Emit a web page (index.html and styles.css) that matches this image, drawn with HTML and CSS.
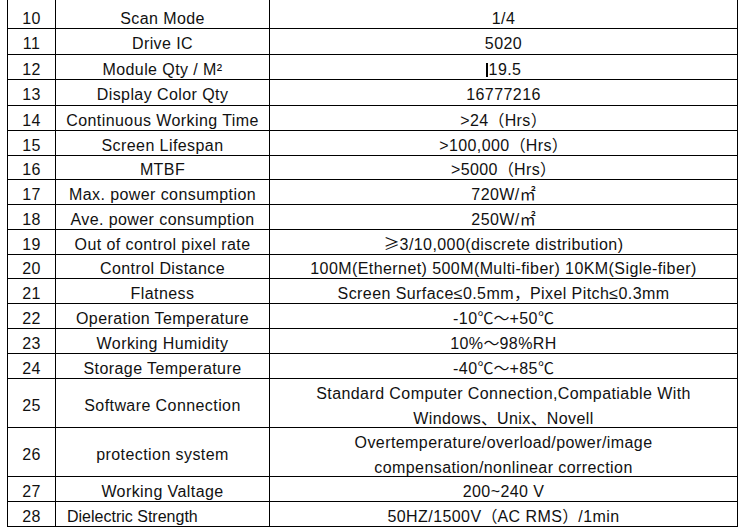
FILE: index.html
```html
<!DOCTYPE html>
<html>
<head>
<meta charset="utf-8">
<link rel="stylesheet" href="styles.css">
</head>
<body>
<div class="sheet">
  <div class="cell"></div><div class="cell"></div><div class="cell"></div>

  <div class="cell"><span>10</span></div><div class="cell"><span>Scan Mode</span></div><div class="cell"><span>1/4</span></div>
  <div class="cell"><span>11</span></div><div class="cell"><span>Drive IC</span></div><div class="cell"><span>5020</span></div>
  <div class="cell"><span>12</span></div><div class="cell"><span>Module Qty / M²</span></div><div class="cell"><span><span class="caret"></span>19.5</span></div>
  <div class="cell"><span>13</span></div><div class="cell"><span>Display Color Qty</span></div><div class="cell"><span>16777216</span></div>
  <div class="cell"><span>14</span></div><div class="cell"><span>Continuous Working Time</span></div><div class="cell"><span>&gt;24<span class="cjk">（</span>Hrs<span class="cjk">）</span></span></div>
  <div class="cell"><span>15</span></div><div class="cell"><span>Screen Lifespan</span></div><div class="cell"><span>&gt;100,000<span class="cjk">（</span>Hrs<span class="cjk">）</span></span></div>
  <div class="cell"><span>16</span></div><div class="cell"><span>MTBF</span></div><div class="cell"><span>&gt;5000<span class="cjk">（</span>Hrs<span class="cjk">）</span></span></div>
  <div class="cell"><span>17</span></div><div class="cell"><span>Max. power consumption</span></div><div class="cell"><span>720W/<span class="cjk">㎡</span></span></div>
  <div class="cell"><span>18</span></div><div class="cell"><span>Ave. power consumption</span></div><div class="cell"><span>250W/<span class="cjk">㎡</span></span></div>
  <div class="cell"><span>19</span></div><div class="cell"><span>Out of control pixel rate</span></div><div class="cell"><span><span class="cjk">≥</span>3/10,000(discrete distribution)</span></div>
  <div class="cell"><span>20</span></div><div class="cell"><span>Control Distance</span></div><div class="cell"><span>100M(Ethernet) 500M(Multi-fiber) 10KM(Sigle-fiber)</span></div>
  <div class="cell"><span>21</span></div><div class="cell"><span>Flatness</span></div><div class="cell"><span>Screen Surface≤0.5mm<span class="cjk">，</span>Pixel Pitch≤0.3mm</span></div>
  <div class="cell"><span>22</span></div><div class="cell"><span>Operation Temperature</span></div><div class="cell"><span>-10<span class="cjk">℃～</span>+50<span class="cjk">℃</span></span></div>
  <div class="cell"><span>23</span></div><div class="cell"><span>Working Humidity</span></div><div class="cell"><span>10%<span class="cjk">～</span>98%RH</span></div>
  <div class="cell"><span>24</span></div><div class="cell"><span>Storage Temperature</span></div><div class="cell"><span>-40<span class="cjk">℃～</span>+85<span class="cjk">℃</span></span></div>
  <div class="cell"><span>25</span></div><div class="cell"><span>Software Connection</span></div><div class="cell two"><span>Standard Computer Connection,Compatiable With<br>Windows<span class="cjk">、</span>Unix<span class="cjk">、</span>Novell</span></div>
  <div class="cell"><span>26</span></div><div class="cell"><span>protection system</span></div><div class="cell two"><span>Overtemperature/overload/power/image<br>compensation/nonlinear correction</span></div>
  <div class="cell"><span>27</span></div><div class="cell"><span>Working Valtage</span></div><div class="cell"><span>200~240 V</span></div>
  <div class="cell"><span>28</span></div><div class="cell left"><span>Dielectric Strength</span></div><div class="cell"><span>50HZ/1500V<span class="cjk">（</span>AC RMS<span class="cjk">）</span>/1min</span></div>
</div>
</body>
</html>
```

FILE: styles.css
```css
html, body {
  margin: 0;
  padding: 0;
  background: #fff;
}

body {
  font-family: "Liberation Sans", Arial, "Noto Sans CJK SC", sans-serif;
  font-size: 16px;
  letter-spacing: 0.42px;
  color: #111;
}

.sheet {
  display: grid;
  width: 731px;
  margin-left: 7px;
  box-sizing: border-box;
  padding: 0 1px 1px 1px;
  gap: 1px;
  background: #000;
  grid-template-columns: 47px 213px 467px;
  grid-template-rows: 3px 24px 25px 24px 25px 24px 24px 23px 24px 24px 24px 23px 24px 24px 24px 24px 48px 48px 24px 24px;
}

.cell {
  background: #fff;
  display: flex;
  align-items: center;
  justify-content: center;
  text-align: center;
  white-space: nowrap;
  padding-top: 4px;
  box-sizing: border-box;
  overflow: visible;
  line-height: 17px;
}

.cell.two {
  line-height: 25px;
  padding-top: 6px;
}

.cell.left {
  justify-content: flex-start;
  padding-left: 11px;
  letter-spacing: 0;
}

.cjk {
  font-family: "Noto Sans CJK SC", sans-serif;
  letter-spacing: 0;
  line-height: 1px;
}

.caret {
  display: inline-block;
  width: 2px;
  height: 14px;
  background: #000;
  margin-right: 1px;
  margin-bottom: -2px;
}
```
